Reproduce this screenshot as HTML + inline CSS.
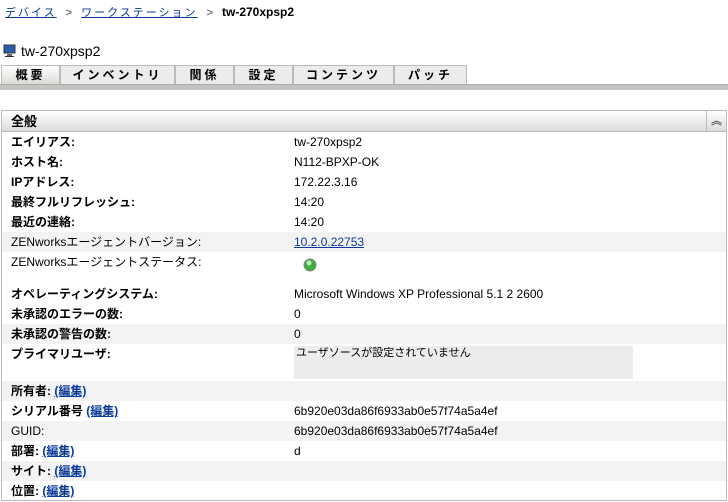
<!DOCTYPE html>
<html><head><meta charset="utf-8"><style>
*{margin:0;padding:0;box-sizing:border-box}
body{width:728px;height:502px;background:#fff;font-family:"Liberation Sans","Noto Sans CJK JP",sans-serif;font-size:12px;color:#000;position:relative;overflow:hidden}
a{color:#0a3a9a}
.bc{position:absolute;top:4px;left:5px;font-size:11px}
.bc a{text-decoration:underline;letter-spacing:2px}
.bc .s{color:#777;margin:0 9px;font-weight:bold}
.bc b{font-size:12px}
.title{position:absolute;top:43px;left:3px;font-size:14px;display:flex;align-items:center}
.tabs{position:absolute;top:65px;left:1px;height:20px;display:flex}
.tab{height:20px;background:#ececec;border:1px solid #bbb;border-bottom:none;font-weight:bold;font-size:12px;text-align:center;line-height:19px;letter-spacing:3px}
.tab.on{background:linear-gradient(#fff,#d8d8d4)}
.bar{position:absolute;top:84px;left:0;width:728px;height:6px;background:#c4c4c0;border-top:1px solid #aaa}
.panel{position:absolute;top:110px;left:1px;width:726px;height:391px;border:1px solid #bbb}
.hd{height:21px;background:linear-gradient(#fff,#dcdcda);border-bottom:1px solid #bbb;font-weight:bold;font-size:13px;padding-left:9px;line-height:21px;position:relative}
.hd .c{position:absolute;right:0;top:0;width:20px;height:20px;border-left:1px solid #bbb;text-align:center;font-size:11px;color:#555;line-height:20px}
.r{height:20px;position:relative;line-height:20px}
.r .l{position:absolute;left:9px;font-weight:bold}
.r .v{position:absolute;left:292px}
.g{background:#f3f3f3}
.r .l a{font-weight:bold;text-decoration:underline}
</style></head><body>
<div class="bc"><a>デバイス</a><span class="s">&gt;</span><a>ワークステーション</a><span class="s">&gt;</span><b>tw-270xpsp2</b></div>
<div class="title"><svg width="14" height="14" viewBox="0 0 14 14"><rect x="1" y="1" width="11" height="8" fill="#2a5fb0" stroke="#333"/><rect x="4" y="10" width="5" height="2" fill="#666"/><rect x="2" y="12" width="9" height="1" fill="#333"/></svg><span style="margin-left:4px">tw-270xpsp2</span></div>
<div class="tabs">
<div class="tab on" style="width:59px">概要</div>
<div class="tab" style="width:115px">インベントリ</div>
<div class="tab" style="width:59px">関係</div>
<div class="tab" style="width:59px">設定</div>
<div class="tab" style="width:101px">コンテンツ</div>
<div class="tab" style="width:73px">パッチ</div>
</div>
<div class="bar"></div>
<div class="panel">
<div class="hd">全般<div class="c">︽</div></div>
<div class="r"><span class="l">エイリアス:</span><span class="v">tw-270xpsp2</span></div>
<div class="r"><span class="l">ホスト名:</span><span class="v">N112-BPXP-OK</span></div>
<div class="r"><span class="l">IPアドレス:</span><span class="v">172.22.3.16</span></div>
<div class="r"><span class="l">最終フルリフレッシュ:</span><span class="v">14:20</span></div>
<div class="r"><span class="l">最近の連絡:</span><span class="v">14:20</span></div>
<div class="r g"><span class="l" style="font-weight:normal">ZENworksエージェントバージョン:</span><span class="v"><a style="text-decoration:underline">10.2.0.22753</a></span></div>
<div class="r" style="height:32px"><span class="l" style="font-weight:normal">ZENworksエージェントステータス:</span><span class="v" style="left:301px;top:6px"><svg width="14" height="14"><circle cx="7" cy="7" r="6" fill="#3bb03b" stroke="#888"/><circle cx="6" cy="5" r="2.5" fill="#bfe8bf"/></svg></span></div>
<div class="r"><span class="l">オペレーティングシステム:</span><span class="v">Microsoft Windows XP Professional 5.1 2 2600</span></div>
<div class="r"><span class="l">未承認のエラーの数:</span><span class="v">0</span></div>
<div class="r g"><span class="l">未承認の警告の数:</span><span class="v">0</span></div>
<div class="r" style="height:37px"><span class="l">プライマリユーザ:</span><div style="position:absolute;left:292px;top:2px;width:339px;height:33px;background:#ececea;font-size:11px;line-height:14px;padding-left:2px">ユーザソースが設定されていません</div></div>
<div class="r g"><span class="l">所有者: <a>(編集)</a></span></div>
<div class="r"><span class="l">シリアル番号 <a>(編集)</a></span><span class="v">6b920e03da86f6933ab0e57f74a5a4ef</span></div>
<div class="r g"><span class="l" style="font-weight:normal">GUID:</span><span class="v">6b920e03da86f6933ab0e57f74a5a4ef</span></div>
<div class="r"><span class="l">部署: <a>(編集)</a></span><span class="v">d</span></div>
<div class="r g"><span class="l">サイト: <a>(編集)</a></span></div>
<div class="r"><span class="l">位置: <a>(編集)</a></span></div>
</div>
</body></html>
